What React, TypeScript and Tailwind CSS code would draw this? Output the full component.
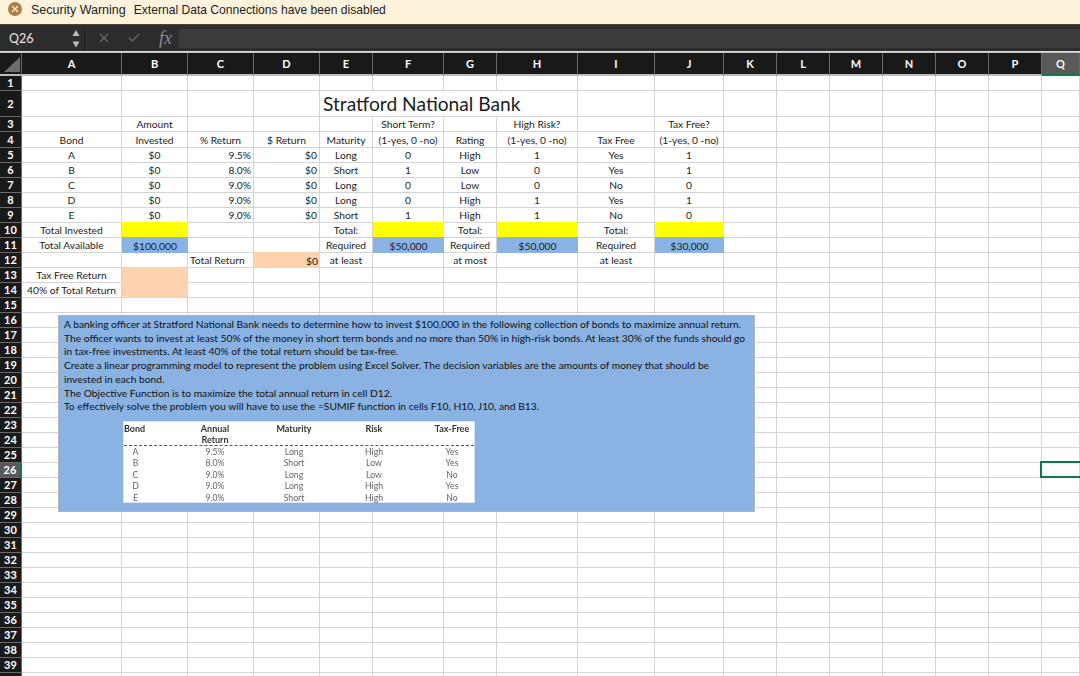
import { Check, X } from 'lucide-react'

type Cell = { c: number; t?: string; a?: 'l' | 'c' | 'r'; bg?: string; span?: string; big?: boolean }

const cols = ['A', 'B', 'C', 'D', 'E', 'F', 'G', 'H', 'I', 'J', 'K', 'L', 'M', 'N', 'O', 'P', 'Q']

const yellow = 'bg-[#ffff00]'
const blue = 'bg-[#8ab3e4]'
const peach = 'bg-[#fdd2ae]'

const bondRow = (bond: string, pct: string, m: string, s: string, rating: string, h: string, tax: string, tv: string): Cell[] => [
  { c: 0, t: bond },
  { c: 1, t: '$0' },
  { c: 2, t: pct, a: 'r' },
  { c: 3, t: '$0', a: 'r' },
  { c: 4, t: m },
  { c: 5, t: s },
  { c: 6, t: rating },
  { c: 7, t: h },
  { c: 8, t: tax },
  { c: 9, t: tv },
]

const rows: Record<number, Cell[]> = {
  2: [{ c: 4, t: 'Stratford National Bank', big: true, span: 'col-span-4' }],
  3: [
    { c: 1, t: 'Amount' },
    { c: 5, t: 'Short Term?' },
    { c: 7, t: 'High Risk?' },
    { c: 9, t: 'Tax Free?' },
  ],
  4: [
    { c: 0, t: 'Bond' },
    { c: 1, t: 'Invested' },
    { c: 2, t: '% Return' },
    { c: 3, t: '$ Return' },
    { c: 4, t: 'Maturity' },
    { c: 5, t: '(1-yes, 0 -no)' },
    { c: 6, t: 'Rating' },
    { c: 7, t: '(1-yes, 0 -no)' },
    { c: 8, t: 'Tax Free' },
    { c: 9, t: '(1-yes, 0 -no)' },
  ],
  5: bondRow('A', '9.5%', 'Long', '0', 'High', '1', 'Yes', '1'),
  6: bondRow('B', '8.0%', 'Short', '1', 'Low', '0', 'Yes', '1'),
  7: bondRow('C', '9.0%', 'Long', '0', 'Low', '0', 'No', '0'),
  8: bondRow('D', '9.0%', 'Long', '0', 'High', '1', 'Yes', '1'),
  9: bondRow('E', '9.0%', 'Short', '1', 'High', '1', 'No', '0'),
  10: [
    { c: 0, t: 'Total Invested' },
    { c: 1, bg: yellow },
    { c: 4, t: 'Total:' },
    { c: 5, bg: yellow },
    { c: 6, t: 'Total:' },
    { c: 7, bg: yellow },
    { c: 8, t: 'Total:' },
    { c: 9, bg: yellow },
  ],
  11: [
    { c: 0, t: 'Total Available' },
    { c: 1, t: '$100,000', bg: blue },
    { c: 4, t: 'Required' },
    { c: 5, t: '$50,000', bg: blue },
    { c: 6, t: 'Required' },
    { c: 7, t: '$50,000', bg: blue },
    { c: 8, t: 'Required' },
    { c: 9, t: '$30,000', bg: blue },
  ],
  12: [
    { c: 2, t: 'Total Return', a: 'l' },
    { c: 3, t: '$0', a: 'r', bg: peach },
    { c: 4, t: 'at least' },
    { c: 6, t: 'at most' },
    { c: 8, t: 'at least' },
  ],
  13: [
    { c: 0, t: 'Tax Free Return' },
    { c: 1, bg: peach },
  ],
  14: [
    { c: 0, t: '40% of Total Return' },
    { c: 1, bg: peach },
  ],
}

const note = [
  'A banking officer at Stratford National Bank needs to determine how to invest $100,000 in the following collection of bonds to maximize annual return.',
  'The officer wants to invest at least 50% of the money in short term bonds and no more than 50% in high-risk bonds. At least 30% of the funds should go',
  'in tax-free investments. At least 40% of the total return should be tax-free.',
  'Create a linear programming model to represent the problem using Excel Solver. The decision variables are the amounts of money that should be',
  'invested in each bond.',
  'The Objective Function is to maximize the total annual return in cell D12.',
  'To effectively solve the problem you will have to use the =SUMIF function in cells F10, H10, J10, and B13.',
]

const bonds = [
  ['A', '9.5%', 'Long', 'High', 'Yes'],
  ['B', '8.0%', 'Short', 'Low', 'Yes'],
  ['C', '9.0%', 'Long', 'Low', 'No'],
  ['D', '9.0%', 'Long', 'High', 'Yes'],
  ['E', '9.0%', 'Short', 'High', 'No'],
]

function SheetRow({ r }: { r: number }) {
  const data = rows[r] || []
  const out = []
  for (let c = 0; c < 17; c++) {
    const d = data.find((x) => x.c === c)
    if (r === 2 && c > 4 && c < 8) continue
    const align = d?.a === 'r' ? 'justify-end pr-[2px]' : d?.a === 'l' ? 'justify-start pl-[2px]' : 'justify-center'
    const line = d?.bg ? `${d.bg} -mt-px` : 'border-r border-b border-[#d4d4d4]'
    out.push(
      <div key={c} className={`relative flex items-end whitespace-nowrap ${align} ${line} ${d?.span || ''} ${d?.big ? 'text-[19.2px] leading-[24px] justify-start pl-[3px]' : ''}`}>
        {d?.t}
        {r === 26 && c === 16 && <div className="absolute -left-[2px] -top-[2px] -bottom-px -right-px border-2 border-r-0 border-[#0b7a45]" />}
      </div>,
    )
  }
  return (
    <>
      <div className={`flex items-center justify-center border-b border-[#6a6a6a] text-[11px] font-bold text-white ${r === 26 ? 'bg-[#595959] border-r-2 border-r-[#0b7a45]' : 'border-r bg-[#191919]'}`}>
        {r < 40 ? r : ''}
      </div>
      {out}
    </>
  )
}

export default function App() {
  const rowNums = Array.from({ length: 40 }, (_, i) => i + 1)
  return (
    <div className="flex h-[676px] w-[1080px] flex-col overflow-hidden bg-white font-['Lato',sans-serif] text-[10.25px] leading-[14px] text-[#1c1c1c]">
      <div className="flex h-[25px] shrink-0 items-center border-b border-[#4a4436] bg-[#fdf3dc] pb-[4px] font-['Liberation_Sans',sans-serif] text-[#222]">
        <div className="-mt-[2px] ml-[8px] flex h-[14px] w-[14px] items-center justify-center rounded-full bg-[#b07d45]">
          <X size={10} strokeWidth={3} className="text-[#fdf3dc]" />
        </div>
        <span className="ml-[9px] text-[12.5px]">Security Warning</span>
        <span className="ml-[8px] text-[12.1px]">External Data Connections have been disabled</span>
      </div>

      <div className="flex h-[26px] shrink-0 items-center bg-[#2d2d2d]">
        <div className="w-[64px] pl-[9px] pt-[2px] text-[12.5px] text-[#e6e6e6]">Q26</div>
        <svg width="10" height="20" viewBox="0 0 10 20" className="ml-[7px]">
          <path d="M5 2 L8.5 8 H1.5 Z" fill="#bcbcbc" />
          <path d="M5 19.5 L1.5 13.5 H8.5 Z" fill="#bcbcbc" />
        </svg>
        <div className="ml-[3px] h-[26px] w-px bg-[#232323]" />
        <X size={14} strokeWidth={2.5} className="ml-[12px] text-[#666]" />
        <Check size={14} strokeWidth={2.5} className="ml-[16px] text-[#666]" />
        <span className="ml-[18px] w-[18px] font-['Liberation_Serif',serif] text-[18px] italic text-[#8a8a8a]">fx</span>
        <div className="ml-[2px] h-[19px] flex-1 bg-[#3b3b3b]" />
      </div>

      <div className="relative">
        <div className="h-[2px] border-t border-[#e0e0e0] bg-[#bdbdbd]" />
        <div className="grid grid-cols-[22px_100px_66px_66px_66px_53px_71px_53px_81px_77px_69px_53px_53px_53px_53px_53px_53px_38px] grid-rows-[23px_15px_26px_15px_16px_repeat(36,15px)]">
          <div className="border-r border-b-2 border-r-[#6a6a6a] border-b-[#bdbdbd] bg-[#191919] pt-[4px] pl-[4px]">
            <svg width="16" height="16" viewBox="0 0 16 16">
              <path d="M16 0 V15 H0 Z" fill="#6e6e6e" />
            </svg>
          </div>
          {cols.map((col) => (
            <div
              key={col}
              className={`flex items-center justify-center border-r border-b-2 border-r-[#6a6a6a] pt-[1px] text-[11px] font-bold text-white ${col === 'Q' ? 'bg-[#595959] border-b-[#0b7a45]' : 'bg-[#191919] border-b-[#bdbdbd]'}`}
            >
              {col}
            </div>
          ))}
          {rowNums.map((r) => (
            <SheetRow key={r} r={r} />
          ))}
        </div>

        {/* text box floating over the sheet */}
        <div className="absolute left-[58px] top-[264px] h-[197px] w-[697px] border border-[#b4b4b4] bg-[#8ab3e4] pl-[5px] pt-[2px] text-[10.25px] leading-[13.7px] text-[#111]">
          {note.map((line) => (
            <div key={line} className="whitespace-nowrap">
              {line}
            </div>
          ))}
          <div className="absolute left-[64px] top-[105px] h-[82px] w-[352px] border border-[#d6e2f2] bg-white pt-[1px] text-[8.7px] leading-[11.4px] text-[#666] blur-[0.3px]">
            <div className="grid h-[23px] grid-cols-[37px_108px_50px_110px_46px] border-b border-dashed border-[#555] text-[9px] font-bold text-[#333]">
              <div>Bond</div>
              <div className="text-center">Annual<br />Return</div>
              <div className="text-center">Maturity</div>
              <div className="text-center">Risk</div>
              <div className="text-center">Tax-Free</div>
            </div>
            <div>
              {bonds.map((b) => (
                <div key={b[0]} className="grid grid-cols-[37px_108px_50px_110px_46px]">
                  <div className="w-[23px] text-center">{b[0]}</div>
                  <div className="text-center">{b[1]}</div>
                  <div className="text-center">{b[2]}</div>
                  <div className="text-center">{b[3]}</div>
                  <div className="text-center">{b[4]}</div>
                </div>
              ))}
            </div>
          </div>
        </div>
      </div>
    </div>
  )
}
